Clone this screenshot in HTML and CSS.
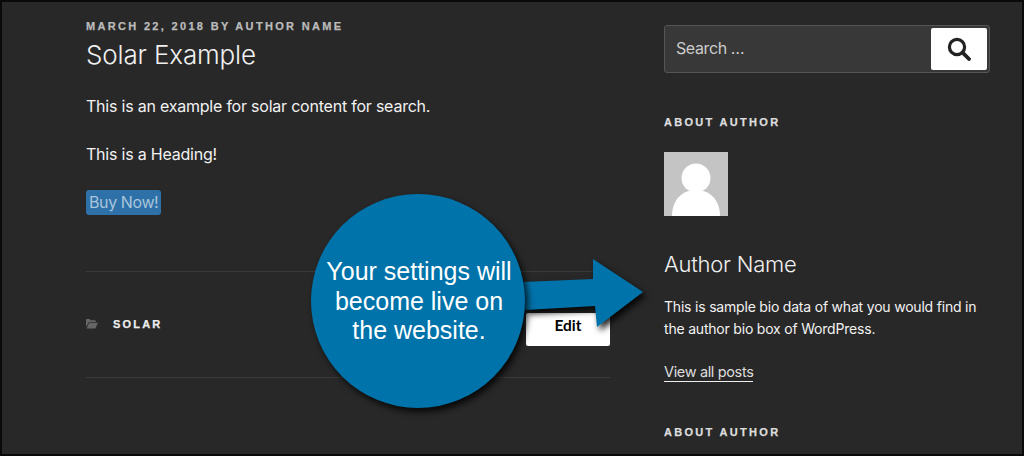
FILE: index.html
```html
<!DOCTYPE html>
<html lang="en">
<head>
<meta charset="utf-8">
<title>Solar Example</title>
<link rel="stylesheet" href="styles.css">
</head>
<body>
<div class="page">
  <main class="post">
    <div class="meta">March 22, 2018 by Author Name</div>
    <h1 class="title">Solar Example</h1>
    <p class="para first">This is an example for solar content for search.</p>
    <p class="para">This is a Heading!</p>
    <p class="buy-row"><a class="buy">Buy Now!</a></p>
    <footer class="post-foot">
      <div class="cat">
        <svg class="folder" viewBox="0 0 12 10" width="12" height="10"><path d="M0 1.2C0 .5.4 0 1 0h2.6l1 1.3H9c.5 0 .9.4.9.9V3H3L0 8z" fill="#666"/><path d="M3.2 3.8H12L9.4 9.6H0.6z" fill="#666"/></svg>
        <span class="cat-name">Solar</span>
      </div>
      <a class="edit">Edit</a>
    </footer>
  </main>
  <aside class="side">
    <form class="search">
      <span class="search-text">Search …</span>
      <span class="search-btn">
        <svg viewBox="0 0 24 24" width="24" height="24"><circle cx="10" cy="10" r="7.6" fill="none" stroke="#222" stroke-width="3.2"/><path d="M15.6 15.6L22 22" stroke="#222" stroke-width="3.8" stroke-linecap="round"/></svg>
      </span>
    </form>
    <h2 class="widget-title">About Author</h2>
    <svg class="avatar" viewBox="0 0 64 64" width="64" height="64"><rect width="64" height="64" fill="#c4c4c4"/><circle cx="32" cy="26" r="14.5" fill="#fff"/><path d="M8 64C8 48 18 38 32 38s24 10 24 26z" fill="#fff"/></svg>
    <h3 class="author">Author Name</h3>
    <p class="bio">This is sample bio data of what you would find in the author bio box of WordPress.</p>
    <a class="all-posts">View all posts</a>
    <h2 class="widget-title second">About Author</h2>
  </aside>
  <div class="callout">
    <svg class="arrow" viewBox="0 0 140 80" width="140" height="80"><polygon points="0,30 70,27 70,7 120,40 74,75 72,54 2,58" fill="#0073aa"/></svg>
    <div class="bubble">Your settings will become live on the website.</div>
  </div>
</div>
</body>
</html>
```
FILE: styles.css
```css
* { box-sizing: border-box; }
html, body { margin: 0; height: 456px; overflow: hidden; }
body { font-family: "Inter", "Liberation Sans", sans-serif; color: #eee; background: #000; }
.page {
  position: relative;
  width: 1024px;
  height: 456px;
  overflow: hidden;
  background: #282828;
  border: 2px solid #0a0a0a;
  display: grid;
  grid-template-columns: 524px 326px;
  column-gap: 54px;
  padding-left: 84px;
  align-items: start;
}
.post { padding-top: 16px; }
.meta {
  font: bold 11px/16px "Liberation Sans", sans-serif;
  letter-spacing: 2.32px;
  text-transform: uppercase;
  color: #bbb;
  -webkit-text-stroke: 0.25px #bbb;
}
.title { margin: 2px 0 0; font-size: 26px; line-height: 38px; font-weight: 300; color: #f0f0f0; letter-spacing: -0.15px; }
.para { margin: 0 0 24px; font-size: 16px; line-height: 24px; letter-spacing: -0.22px; color: #f2f2f2; }
.para.first { margin-top: 20px; }
.buy-row { margin: 0; height: 25px; font-size: 16px; line-height: 25px; }
.buy {
  display: inline-block;
  padding: 0 3px;
  height: 25px;
  line-height: 25px;
  border-radius: 3px;
  background: #2e70a8;
  color: #a9c5da;
  letter-spacing: -0.4px;
}
.post-foot {
  margin-top: 56px;
  height: 107px;
  border-top: 1px solid #3a3a3a;
  border-bottom: 1px solid #3a3a3a;
  display: flex;
  align-items: center;
  justify-content: space-between;
}
.cat { display: flex; align-items: center; margin-bottom: 2px; }
.folder { margin-right: 15px; }
.cat-name {
  font: bold 11px/16px "Liberation Sans", sans-serif;
  letter-spacing: 2.2px;
  text-transform: uppercase;
  color: #eee;
  -webkit-text-stroke: 0.25px #eee;
}
.edit {
  width: 84px;
  height: 33px;
  margin-top: 10px;
  background: #fff;
  color: #000;
  border-radius: 2px;
  font: 700 15.5px/24px "Lato", "Liberation Sans", sans-serif;
  text-align: center;
}
.side { padding-top: 23px; }
.search {
  height: 48px;
  border: 1px solid #555;
  border-radius: 3px;
  background: #383838;
  display: flex;
  align-items: center;
  justify-content: space-between;
  padding: 2px;
}
.search-text { padding-left: 9px; padding-bottom: 2px; font-size: 16px; letter-spacing: -0.4px; color: #ccc; }
.search-btn {
  width: 56px;
  height: 42px;
  background: #fff;
  border-radius: 2px;
  display: flex;
  align-items: center;
  justify-content: center;
}
.widget-title {
  margin: 41px 0 0;
  font: bold 11px/16px "Liberation Sans", sans-serif;
  letter-spacing: 2.3px;
  text-transform: uppercase;
  color: #ddd;
  -webkit-text-stroke: 0.25px #ddd;
}
.avatar { display: block; margin-top: 22px; }
.author { margin: 32px 0 0; font-size: 22px; line-height: 32px; font-weight: 300; letter-spacing: -0.25px; color: #f0f0f0; }
.bio { margin: 16px 0 0; font-size: 14px; line-height: 22px; letter-spacing: -0.2px; color: #f2f2f2; }
.all-posts { display: inline-block; margin-top: 23px; font-size: 14.5px; line-height: 18px; letter-spacing: -0.35px; color: #ddd; border-bottom: 1px solid #eee; }
.widget-title.second { margin-top: 42px; }
.callout { position: absolute; left: 309px; top: 192px; width: 340px; height: 216px; }
.arrow { position: absolute; left: 212px; top: 58px; filter: drop-shadow(3px 4px 3px rgba(0,0,0,.85)); overflow: visible; }
.bubble {
  position: absolute;
  left: 0;
  top: 0;
  width: 214px;
  height: 214px;
  border-radius: 50%;
  background: #0073aa;
  box-shadow: 3px 4px 6px rgba(0,0,0,.8);
  color: #fff;
  font: 25px/29.5px "Liberation Sans", sans-serif;
  text-align: center;
  padding: 63px 7px 0 9px;
}
```
